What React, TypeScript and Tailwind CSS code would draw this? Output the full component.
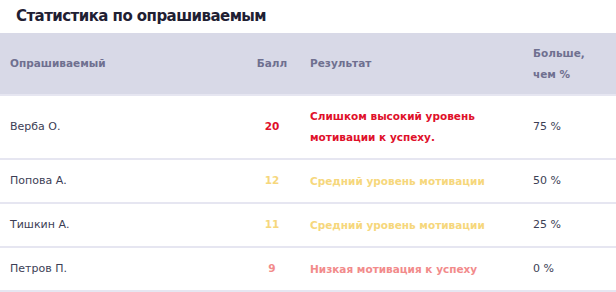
import React from "react";

const rows = [
  { name: "Верба О.", score: "20", scoreCls: "text-[#e0102a]", result: ["Слишком высокий уровень", "мотивации к успеху."], resCls: "text-[#e0102a]", pct: "75 %", h: "h-[64px]" },
  { name: "Попова А.", score: "12", scoreCls: "text-[#f6d77c]", result: ["Средний уровень мотивации"], resCls: "text-[#f6d77c]", pct: "50 %", h: "h-[44px]" },
  { name: "Тишкин А.", score: "11", scoreCls: "text-[#f6d77c]", result: ["Средний уровень мотивации"], resCls: "text-[#f6d77c]", pct: "25 %", h: "h-[44px]" },
  { name: "Петров П.", score: "9", scoreCls: "text-[#f28b8b]", result: ["Низкая мотивация к успеху"], resCls: "text-[#f28b8b]", pct: "0 %", h: "h-[44px]" },
];

export default function App() {
  return (
    <div className="w-[616px] h-[292px] bg-white overflow-hidden" style={{ fontFamily: '"DejaVu Sans", sans-serif' }}>
      <div className="h-[33px] flex items-center pl-[16px]">
        <span className="text-[15px] font-bold text-[#1f2033] tracking-[-0.55px]">Статистика по опрашиваемым</span>
      </div>
      <div className="grid grid-cols-[248px_48px_227px_93px] h-[63px] bg-[#d8d9e7] items-center text-[10.5px] font-bold text-[#6f7090] border-b-2 border-[#e6e6f1]">
        <div className="pl-[10px]">Опрашиваемый</div>
        <div className="text-center">Балл</div>
        <div className="pl-[14px]">Результат</div>
        <div className="pl-[10px] leading-[21px]">Больше,<br />чем %</div>
      </div>
      {rows.map((r) => (
        <div key={r.name} className={`grid grid-cols-[248px_48px_227px_93px] items-center text-[10.5px] border-b-2 border-[#e6e6f1] ${r.h}`}>
          <div className="pl-[10px] text-[11px] text-[#3c3e55]">{r.name}</div>
          <div className={`text-center font-bold ${r.scoreCls}`}>{r.score}</div>
          <div className={`pl-[14px] font-bold leading-[21px] ${r.resCls}`}>
            {r.result.map((l) => (
              <div key={l}>{l}</div>
            ))}
          </div>
          <div className="pl-[10px] text-[11px] text-[#3c3e55]">{r.pct}</div>
        </div>
      ))}
    </div>
  );
}
